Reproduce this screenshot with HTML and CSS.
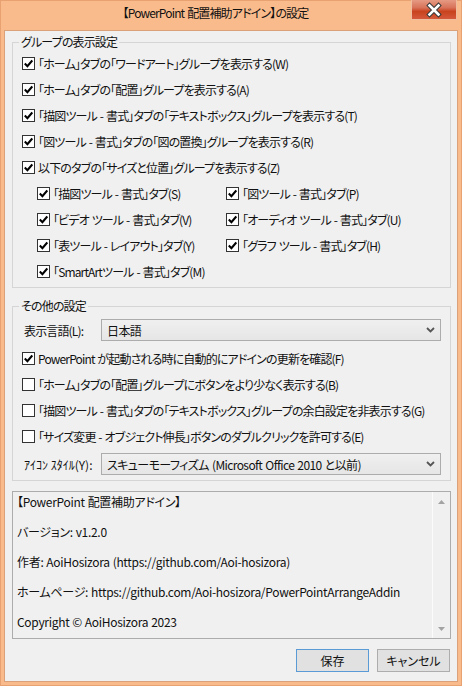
FILE: index.html
```html
<!DOCTYPE html>
<html lang="ja">
<head>
<meta charset="utf-8">
<title>設定</title>
<link rel="stylesheet" href="styles.css">
</head>
<body>
<div class="window">
  <div class="titlebar">
    <div class="title">【PowerPoint 配置補助アドイン】の設定</div>
    <div class="close">
      <svg width="44" height="18" viewBox="0 0 44 18">
        <path d="M17.5 4.5 L26.5 13.5 M26.5 4.5 L17.5 13.5" stroke="#3a3a3a" stroke-width="4.6" stroke-linecap="square" fill="none"/>
        <path d="M17.5 4.5 L26.5 13.5 M26.5 4.5 L17.5 13.5" stroke="#ffffff" stroke-width="2.6" stroke-linecap="square" fill="none"/>
      </svg>
    </div>
  </div>
  <div class="client">
    <fieldset class="group g1">
      <legend>グループの表示設定</legend>
      <div class="rows main">
        <div class="cb"><span class="box on"></span><span>「ホーム」タブの「ワードアート」グループを表示する(W)</span></div>
        <div class="cb"><span class="box on"></span><span>「ホーム」タブの「配置」グループを表示する(A)</span></div>
        <div class="cb"><span class="box on"></span><span>「描図ツール - 書式」タブの「テキストボックス」グループを表示する(T)</span></div>
        <div class="cb"><span class="box on"></span><span>「図ツール - 書式」タブの「図の置換」グループを表示する(R)</span></div>
        <div class="cb"><span class="box on"></span><span>以下のタブの「サイズと位置」グループを表示する(Z)</span></div>
      </div>
      <div class="subgrid">
        <div class="cb"><span class="box on"></span><span>「描図ツール - 書式」タブ(S)</span></div>
        <div class="cb"><span class="box on"></span><span>「図ツール - 書式」タブ(P)</span></div>
        <div class="cb"><span class="box on"></span><span>「ビデオ ツール - 書式」タブ(V)</span></div>
        <div class="cb"><span class="box on"></span><span>「オーディオ ツール - 書式」タブ(U)</span></div>
        <div class="cb"><span class="box on"></span><span>「表ツール - レイアウト」タブ(Y)</span></div>
        <div class="cb"><span class="box on"></span><span>「グラフ ツール - 書式」タブ(H)</span></div>
        <div class="cb"><span class="box on"></span><span>「SmartArtツール - 書式」タブ(M)</span></div>
      </div>
    </fieldset>

    <fieldset class="group g2">
      <legend>その他の設定</legend>
      <div class="field">
        <span class="flabel">表示言語(L):</span>
        <div class="combo"><span>日本語</span><svg class="chev" width="9" height="6" viewBox="0 0 9 6"><path d="M1 1 L4.5 4.5 L8 1" stroke="#555" stroke-width="1.8" fill="none"/></svg></div>
      </div>
      <div class="rows g2rows">
        <div class="cb"><span class="box on"></span><span>PowerPoint が起動される時に自動的にアドインの更新を確認(F)</span></div>
        <div class="cb"><span class="box"></span><span>「ホーム」タブの「配置」グループにボタンをより少なく表示する(B)</span></div>
        <div class="cb"><span class="box"></span><span>「描図ツール - 書式」タブの「テキストボックス」グループの余白設定を非表示する(G)</span></div>
        <div class="cb"><span class="box"></span><span>「サイズ変更 - オブジェクト伸長」ボタンのダブルクリックを許可する(E)</span></div>
      </div>
      <div class="field field2">
        <span class="flabel small">ｱｲｺﾝ ｽﾀｲﾙ(Y):</span>
        <div class="combo"><span>スキューモーフィズム (Microsoft Office 2010 と以前)</span><svg class="chev" width="9" height="6" viewBox="0 0 9 6"><path d="M1 1 L4.5 4.5 L8 1" stroke="#555" stroke-width="1.8" fill="none"/></svg></div>
      </div>
    </fieldset>

    <div class="info">
      <div class="info-text">
        <p>【PowerPoint 配置補助アドイン】</p>
        <p>バージョン: v1.2.0</p>
        <p>作者: AoiHosizora (https://github.com/Aoi-hosizora)</p>
        <p>ホームページ: https://github.com/Aoi-hosizora/PowerPointArrangeAddin</p>
        <p>Copyright © AoiHosizora 2023</p>
      </div>
      <div class="scroll">
        <svg width="7" height="4" viewBox="0 0 7 4"><path d="M0 4 L3.5 0 L7 4 Z" fill="#a3a3a3"/></svg>
        <svg width="7" height="4" viewBox="0 0 7 4"><path d="M0 0 L3.5 4 L7 0 Z" fill="#a3a3a3"/></svg>
      </div>
    </div>

    <div class="buttons">
      <div class="btn default">保存</div>
      <div class="btn">キャンセル</div>
    </div>
  </div>
</div>
</body>
</html>
```

FILE: styles.css
```css
* { box-sizing: border-box; }
html, body { margin: 0; padding: 0; }
body {
  width: 462px;
  height: 686px;
  overflow: hidden;
  background: #f9bb8c;
  font-family: "Noto Sans CJK JP", sans-serif;
  font-size: 12px;
  letter-spacing: -0.85px;
  word-spacing: 1px;
  color: #111;
  font-feature-settings: "palt";
}
.window {
  width: 462px;
  height: 686px;
  background: #f9bb8c;
  border: 1px solid #e8a272;
  padding: 0 3px 3px;
  display: flex;
  flex-direction: column;
}
.titlebar {
  height: 29px;
  display: flex;
  align-items: flex-start;
  flex: none;
}
.title {
  flex: 1;
  text-align: center;
  padding-left: 16px;
  line-height: 24px;
  white-space: nowrap;
}
.close {
  width: 46px;
  height: 20px;
  margin-right: 1px;
  margin-top: -1px;
  border: 1px solid #eebd9f;
  border-top: none;
  background: linear-gradient(#e69a83 0%, #d8735a 40%, #c9431f 60%, #d4583a 100%);
  display: flex;
  align-items: center;
  justify-content: center;
}
.close svg { display: block; }
.client {
  flex: 1;
  background: #f0f0f0;
  border: 1px solid #dba27a;
  padding: 3px 6px 0 7px;
  display: flex;
  flex-direction: column;
}
.group {
  margin: 0;
  padding: 0;
  border: 1px solid #d5d5d5;
  min-width: 0;
}
.group legend {
  margin-left: 6px;
  padding: 0 2px;
  line-height: 16px;
}
.g1 { padding: 0 0 3px; }
.rows.main { padding-left: 9px; }
.cb {
  height: 26px;
  display: flex;
  align-items: center;
  white-space: nowrap;
}
.box {
  flex: none;
  width: 13px;
  height: 13px;
  border: 1px solid #333;
  background: #fff;
  margin-right: 3px;
  position: relative;
}
.box.on::after {
  content: "";
  position: absolute;
  left: 1px;
  top: 1px;
  width: 9px;
  height: 9px;
  background: no-repeat center / 9px 9px url("data:image/svg+xml;utf8,<svg xmlns='http://www.w3.org/2000/svg' width='9' height='9' viewBox='0 0 9 9'><path d='M0.8 4.6 L3.4 7.2 L8.3 1.4' stroke='black' stroke-width='2.1' fill='none'/></svg>");
}
.subgrid {
  display: grid;
  grid-template-columns: 189px 1fr;
  padding-left: 24px;
}
.g2 { margin-top: 10px; padding: 5px 0 5px; }
.field {
  display: flex;
  align-items: center;
  height: 22px;
  padding-left: 11px;
}
.flabel { width: 77px; flex: none; white-space: nowrap; }
.flabel.small { letter-spacing: 0; word-spacing: 0; }
.combo {
  width: 340px;
  height: 22px;
  border: 1px solid #acacac;
  background: linear-gradient(#f0f0f0, #e6e6e6);
  display: flex;
  align-items: center;
  padding-left: 5px;
  padding-right: 5px;
  white-space: nowrap;
  letter-spacing: -0.6px;
}
.combo span { flex: 1; }
.chev { flex: none; display: block; }
.g2rows { padding-left: 9px; margin-top: 4px; }
.field2 { margin-top: 4px; }
.info {
  margin-top: 10px;
  height: 148px;
  border: 1px solid #acacac;
  display: flex;
  flex: none;
}
.info-text {
  flex: 1;
  padding: 2px 4px;
  line-height: 15px;
  white-space: nowrap;
  overflow: hidden;
  letter-spacing: -0.3px;
  word-spacing: 0.5px;
}
.info-text p { margin: 0 0 15px; }
.scroll {
  width: 18px;
  flex: none;
  border-left: 1px solid #fbfbfb;
  display: flex;
  flex-direction: column;
  justify-content: space-between;
  align-items: center;
  padding: 8px 0 7px;
}
.scroll svg { display: block; }
.buttons {
  margin-top: 10px;
  display: flex;
  justify-content: flex-end;
  gap: 8px;
  padding-right: 1px;
}
.btn {
  width: 73px;
  height: 23px;
  border: 1px solid #adadad;
  background: #e1e1e1;
  display: flex;
  align-items: center;
  justify-content: center;
  letter-spacing: 0;
}
.btn.default { border-color: #5a9bd6; }
```
